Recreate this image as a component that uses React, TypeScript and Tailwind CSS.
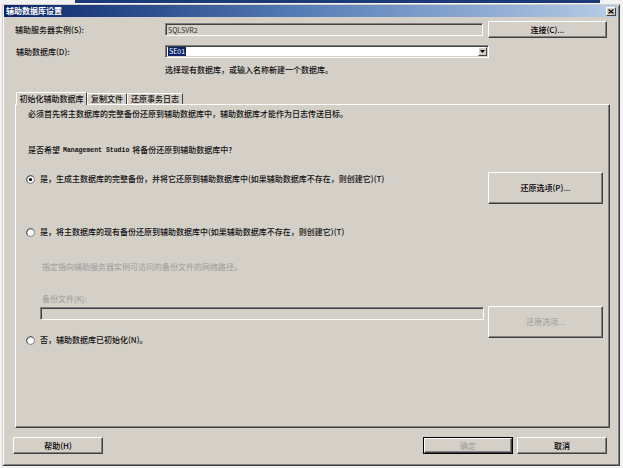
import React from "react";

const raised =
  "border border-t-white border-l-white border-r-[#404040] border-b-[#404040] shadow-[inset_-1px_-1px_0_#808080]";
const sunken =
  "border border-t-[#808080] border-l-[#808080] border-b-white border-r-white shadow-[inset_1px_1px_0_#404040,inset_-1px_-1px_0_#d4d0c8]";

function Radio({ checked }: { checked?: boolean }) {
  return (
    <svg width="9" height="9" viewBox="0 0 9 9" className="shrink-0">
      <circle cx="4.5" cy="4.5" r="4" fill="#ffffff" stroke="#7a7a7a" strokeWidth="1" />
      <path d="M1.3 6.8 A4 4 0 0 1 6.8 1.3" fill="none" stroke="#404040" strokeWidth="0.8" />
      {checked && <circle cx="4.5" cy="4.5" r="1.6" fill="#000000" />}
    </svg>
  );
}

function Btn({
  children,
  className,
  disabled,
}: {
  children: React.ReactNode;
  className?: string;
  disabled?: boolean;
}) {
  return (
    <div
      className={`${raised} flex items-center justify-center bg-[#d4d0c8] text-[8px] leading-[10px] ${
        disabled ? "text-[#9a9a9a] font-normal" : "text-black"
      } ${className ?? ""}`}
    >
      {children}
    </div>
  );
}

export default function App() {
  return (
    <div className="w-[623px] h-[468px] bg-[#f2f2f2] overflow-hidden font-['Noto_Sans_CJK_SC',sans-serif] font-medium text-[8px] leading-[12px] text-[#111]">
      {/* background window strip */}
      <div className="h-[4px] flex">
        <div className="ml-[75px] w-[525px] h-[3px] bg-[#1c3a78]" />
      </div>
      {/* dialog */}
      <div className="ml-[2px] w-[618px] h-[462px] bg-[#d4d0c8] border border-t-[#d4d0c8] border-l-[#d4d0c8] border-r-[#404040] border-b-[#404040] shadow-[inset_1px_1px_0_#ffffff,inset_-1px_-1px_0_#808080] flex flex-col">
        {/* title bar */}
        <div className="mx-[1px] h-[12px] flex items-center bg-gradient-to-r from-[#0a246a] via-[#5a7fb8] to-[#b8cde6]">
          <span className="ml-[2px] text-white font-bold text-[8px] leading-[12px]">辅助数据库设置</span>
          <div className="ml-auto mr-[2px] w-[10px] h-[9px] bg-[#d4d0c8] border border-t-white border-l-white border-r-[#404040] border-b-[#404040] flex items-center justify-center">
            <svg width="6" height="5" viewBox="0 0 6 5">
              <path d="M0.5 0.5 L5.5 4.5 M5.5 0.5 L0.5 4.5" stroke="#000" strokeWidth="1.2" />
            </svg>
          </div>
        </div>

        {/* row 1 */}
        <div className="mt-[4px] h-[17px] flex items-center">
          <div className="ml-[12px] w-[150px]">辅助服务器实例(S):</div>
          <div className={`${sunken} w-[318px] h-[13px] bg-[#d4d0c8] flex items-center pl-[2px] text-[7px] text-[#333] font-normal`}>
            SQLSVR2
          </div>
          <Btn className="ml-[5px] w-[119px] h-[17px]">连接(C)...</Btn>
        </div>

        {/* row 2 */}
        <div className="mt-[7px] h-[13px] flex items-center">
          <div className="ml-[13px] w-[149px]">辅助数据库(D):</div>
          <div className={`${sunken} w-[324px] h-[13px] bg-white flex items-center pl-[2px] pr-[1px]`}>
            <span className="bg-[#0a246a] text-white text-[7px] leading-[9px] px-[1px] font-normal">SE01</span>
            <div className="ml-auto w-[9px] h-[9px] bg-[#d4d0c8] border border-t-white border-l-white border-r-[#404040] border-b-[#404040] flex items-center justify-center">
              <svg width="5" height="3" viewBox="0 0 5 3">
                <path d="M0 0 L5 0 L2.5 3 Z" fill="#000" />
              </svg>
            </div>
          </div>
        </div>

        {/* row 3 */}
        <div className="mt-[6px] h-[12px] ml-[162px]">选择现有数据库，或输入名称新建一个数据库。</div>

        {/* tabs */}
        <div className="mt-[16px] ml-[13px] h-[12px] flex items-end">
          <div className="relative z-10 h-[13px] -mb-[1px] w-[71px] bg-[#d4d0c8] border-t border-l border-r border-t-white border-l-white border-r-[#404040] flex items-center justify-center">
            初始化辅助数据库
          </div>
          <div className="h-[11px] w-[40px] border-t border-l border-r border-t-white border-l-white border-r-[#404040] flex items-center justify-center">
            复制文件
          </div>
          <div className="h-[11px] w-[56px] border-t border-l border-r border-t-white border-l-white border-r-[#404040] flex items-center justify-center">
            还原事务日志
          </div>
        </div>

        {/* panel */}
        <div className={`${raised} ml-[12px] w-[595px] h-[324px] flex flex-col`}>
          <div className="mt-[3px] ml-[12px] h-[12px]">
            必须首先将主数据库的完整备份还原到辅助数据库中，辅助数据库才能作为日志传送目标。
          </div>
          <div className="mt-[24px] ml-[12px] h-[12px] flex items-center">
            <span>是否希望</span>
            <span className="mx-[3px] pt-[2px] font-['Liberation_Mono',monospace] text-[6.5px] leading-[10px] font-bold">Management Studio</span>
            <span>将备份还原到辅助数据库中?</span>
          </div>

          <div className="mt-[16px] flex items-start">
            <div className="mt-[1px] ml-[10px] h-[12px] flex items-center gap-[5px]">
              <Radio checked />
              <span>是，生成主数据库的完整备份，并将它还原到辅助数据库中(如果辅助数据库不存在，则创建它)(T)</span>
            </div>
            <Btn className="ml-auto mr-[6px] w-[115px] h-[32px]">还原选项(P)...</Btn>
          </div>

          <div className="mt-[22px] ml-[10px] h-[12px] flex items-center gap-[5px]">
            <Radio />
            <span>是，将主数据库的现有备份还原到辅助数据库中(如果辅助数据库不存在，则创建它)(T)</span>
          </div>

          <div className="mt-[23px] ml-[26px] h-[12px] text-[#9a9a9a] font-normal">
            指定指向辅助服务器实例可访问的备份文件的网络路径。
          </div>
          <div className="mt-[20px] ml-[26px] h-[12px] text-[#9a9a9a] font-normal">备份文件(K):</div>

          <div className="mt-[1px] flex items-start">
            <div className="flex flex-col">
              <div className={`${sunken} mt-[1px] ml-[24px] w-[444px] h-[13px] bg-[#d4d0c8]`} />
              <div className="mt-[14px] ml-[10px] h-[12px] flex items-center gap-[5px]">
                <Radio />
                <span>否，辅助数据库已初始化(N)。</span>
              </div>
            </div>
            <Btn disabled className="ml-[4px] w-[115px] h-[32px]">
              还原选项...
            </Btn>
          </div>
        </div>

        {/* bottom buttons */}
        <div className="mt-[9px] h-[17px] flex items-center">
          <Btn className="ml-[10px] w-[90px] h-[17px]">帮助(H)</Btn>
          <div className="ml-auto w-[90px] h-[17px] border border-black">
            <Btn disabled className="w-full h-full">
              确定
            </Btn>
          </div>
          <Btn className="ml-[4px] mr-[12px] w-[90px] h-[17px]">取消</Btn>
        </div>
      </div>
    </div>
  );
}
